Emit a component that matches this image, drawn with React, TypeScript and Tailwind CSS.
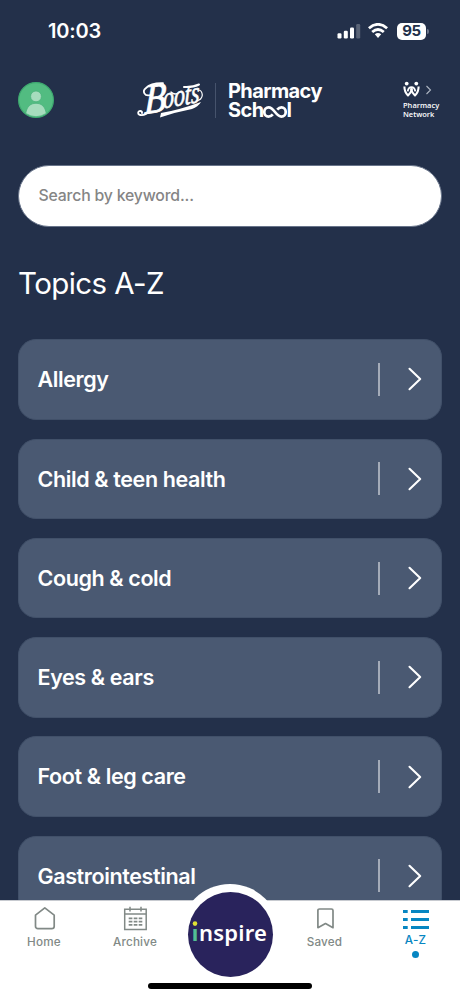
import React from "react";

const topics = [
  "Allergy",
  "Child & teen health",
  "Cough & cold",
  "Eyes & ears",
  "Foot & leg care",
  "Gastrointestinal",
];

function StatusBar() {
  return (
    <div className="flex h-[62px] shrink-0 items-center justify-between pr-[31px] pl-[48px] text-white">
      <span className="text-[20px] leading-6 font-semibold tracking-[-0.2px]">10:03</span>
      <div className="flex items-center">
        <svg width="24" height="16" viewBox="0 0 24 16" fill="white">
          <rect x="0.5" y="10.3" width="4" height="5.2" rx="1.2" />
          <rect x="6.8" y="7.8" width="4" height="7.7" rx="1.2" />
          <rect x="13" y="4.5" width="4" height="11" rx="1.2" />
          <rect x="19.2" y="1" width="4" height="14.5" rx="1.2" fillOpacity=".25" />
        </svg>
        <svg className="ml-[7px]" width="20" height="16" viewBox="0 0 20 16" fill="none" stroke="white" strokeWidth="2.8">
          <path d="M.9 5.2Q10-2.5 19.1 5.2" />
          <path d="M4.2 9Q10 4 15.8 9" />
          <path d="M6.8 11.2Q10 8.6 13.2 11.2L10 14.9Z" fill="white" stroke="none" />
        </svg>
        <div className="ml-[9px] flex h-[17px] w-[29px] items-center justify-center rounded-[5px] bg-white text-[15px] font-bold tracking-[-0.3px] text-[#22304a]">95</div>
        <div className="ml-[1px] h-[5px] w-[2px] rounded-r-full bg-[#69748a]" />
      </div>
    </div>
  );
}

function BootsLogo() {
  return (
    <svg className="block overflow-visible" width="67" height="36" viewBox="0 0 67 36" aria-label="Boots">
      <g fill="white" stroke="white" fontFamily="'Liberation Serif', serif" fontStyle="italic" fontWeight="400">
        <text transform="translate(7 32) rotate(-8) skewX(-10)" fontSize="42" strokeWidth=".9" textLength="22" lengthAdjust="spacingAndGlyphs">B</text>
        <text transform="translate(26 26.5) rotate(-10) skewX(-10)" fontSize="30" strokeWidth=".7" textLength="37" lengthAdjust="spacingAndGlyphs">oots</text>
      </g>
      <g fill="none" stroke="white" strokeLinecap="round">
        <path strokeWidth="1.8" d="M14 13C7 15 5 9 9 6C13 2 20 1 26 1.2" />
        <path strokeWidth="1.9" d="M11 30C8 34 1.2 34 1.2 31C1.2 28 5.5 28.5 5 31" />
        <path strokeWidth="2" d="M47 5Q56 5.5 62 2.5" />
        <path strokeWidth="1.2" d="M34 10Q38 14 43 10M61 8Q65 8 65.3 13Q65 18 59 19" />
      </g>
      <path fill="white" d="M23 35.5L24 31Q42 28 64 20Q61 25 55 27Q39 30 23 35.5Z" />
    </svg>
  );
}

function SchoolLogo() {
  return (
    <div className="ml-[12px] flex h-[38px] w-[95px] flex-col text-[20px] font-bold text-white" aria-label="Pharmacy School">
      <span className="h-[19px] leading-[20px] tracking-[-0.6px]">Pharmacy</span>
      <span className="flex h-[19px] leading-[21px] tracking-[-0.6px]">
        Sch
        <svg className="-ml-[1px] mt-[6px]" width="24" height="12" viewBox="0 0 24 12" fill="none" stroke="white" strokeWidth="2.7">
          <path d="M14.2 3.6C15.5 2.1 17 1.4 18.4 1.4C20.9 1.4 22.7 3.3 22.7 6C22.7 8.7 20.9 10.6 18.4 10.6C12.8 10.6 11.2 1.4 5.6 1.4C3.1 1.4 1.3 3.3 1.3 6C1.3 8.7 3.1 10.6 5.6 10.6C7.2 10.6 8.6 9.9 9.8 8.4" />
        </svg>
        l
      </span>
    </div>
  );
}

function Header() {
  return (
    <header className="flex h-[76px] shrink-0 items-center pl-[18px]">
      <svg width="36" height="36" viewBox="0 0 36 36">
        <circle cx="18" cy="18" r="17.4" fill="#52bc81" stroke="#3eaa70" strokeWidth="1.2" />
        <circle cx="18" cy="14.4" r="5.4" fill="#a6dcbd" stroke="#43af77" strokeWidth=".7" />
        <path d="M7.7 31.4C9 24.5 12.4 21.3 18 21.3S27 24.5 28.3 31.4Q18 38 7.7 31.4Z" fill="#a6dcbd" stroke="#43af77" strokeWidth=".7" />
      </svg>
      <div className="ml-[83px] flex items-center">
        <BootsLogo />
        <div className="ml-[11px] h-[35px] w-[1px] bg-[#46536c]" />
        <SchoolLogo />
      </div>
      <div className="ml-[80px] flex h-[38px] flex-col text-white">
        <div className="flex h-[17px] items-center">
          <svg width="17" height="17" viewBox="0 0 17 17" fill="none" stroke="white" strokeWidth="2.1" strokeLinejoin="round">
            <circle cx="3.7" cy="2.6" r="1.9" fill="white" stroke="none" />
            <circle cx="13.3" cy="2.6" r="1.9" fill="white" stroke="none" />
            <path d="M1.4 5.5C1.4 9.2 2.8 12.4 5 14.5C6.8 12.8 8.4 10.4 9.3 7.2" />
            <path d="M15.6 5.5C15.6 9.2 14.2 12.4 12 14.5C10.2 12.8 8.6 10.4 7.7 7.2" />
            <path d="M4.7 10.3Q5.4 6.2 8.5 6.2T12.3 10.3" strokeWidth="1.8" />
          </svg>
          <svg className="ml-[5px]" width="7" height="10" viewBox="0 0 7 10" fill="none" stroke="#aeb5c1" strokeWidth="1.1"><path d="M1.5 1L5.5 5L1.5 9" /></svg>
        </div>
        <span className="mt-[2.5px] font-['Open_Sans',sans-serif] text-[7.5px] leading-[9px] font-semibold">Pharmacy<br />Network</span>
      </div>
    </header>
  );
}

function TopicCard({ name }: { name: string }) {
  return (
    <div className="flex h-[80.4px] shrink-0 items-center rounded-[18px] border border-[#415069] bg-[#4a5972] pr-[19px] pl-[18.5px]">
      <span className="flex-1 text-[21.5px] font-semibold tracking-[-0.38px] whitespace-nowrap text-white">{name}</span>
      <div className="h-[33px] w-[2px] bg-[#a4abb8]" />
      <svg className="ml-[27px]" width="15" height="24" viewBox="0 0 15 24" fill="none" stroke="white" strokeWidth="2.1" strokeLinecap="round" strokeLinejoin="round">
        <path d="M2.5 1.8L13.2 12L2.5 22.2" />
      </svg>
    </div>
  );
}

function BottomNav() {
  return (
    <nav className="relative flex h-[99px] shrink-0 border-t border-[#c7cad0] bg-white text-[11.7px] leading-[14px] font-medium tracking-[0.2px] text-[#818986]">
      <div className="flex w-[88px] flex-col items-center pt-[5px]">
        <svg width="24" height="26" viewBox="0 0 24 26" fill="none" stroke="currentColor" strokeWidth="1.7" strokeLinejoin="round">
          <path d="M3.5 9.2L12.8 1.9L22.2 9.2V20.2Q22.2 22.6 19.7 22.6H6Q3.5 22.6 3.5 20.2Z" />
        </svg>
        <span className="mt-[3px]">Home</span>
      </div>
      <div className="flex w-[94px] flex-col items-center pt-[5px]">
        <svg width="24" height="26" viewBox="0 0 24 26" fill="none" stroke="currentColor" strokeWidth="1.5">
          <path d="M1.7 3.3H23.2V23.4H1.7ZM1.7 8H23.2M7 .7V5.5M18 .7V5.5" />
          <path d="M5.7 12.4H19.3M5.7 15.6H19.3M5.7 18.8H19.3" strokeWidth="1.7" strokeDasharray="3.7 1.3" />
        </svg>
        <span className="mt-[3px]">Archive</span>
      </div>
      <div className="w-[96px]" />
      <div className="flex w-[93px] flex-col items-center pt-[5px]">
        <svg width="20" height="26" viewBox="0 0 20 26" fill="none" stroke="currentColor" strokeWidth="1.7" strokeLinejoin="round">
          <path d="M2.9 4.6Q2.9 3 4.5 3H16.4Q18 3 18 4.6V21.7L10.5 17.5L2.9 21.7Z" />
        </svg>
        <span className="mt-[3px]">Saved</span>
      </div>
      <div className="flex w-[89px] flex-col items-center pt-[8px] text-[#0786c2]">
        <svg width="26" height="22" viewBox="0 0 26 22" fill="none" stroke="currentColor" strokeWidth="2.8">
          <path d="M0 2.5H4.7M8 2.5H26M0 10.5H4.7M8 10.5H26M0 18.5H4.7M8 18.5H26" />
        </svg>
        <span className="mt-[2px]">A-Z</span>
        <div className="mt-[4px] h-[7px] w-[7px] rounded-full bg-[#0786c2]" />
      </div>
      <div className="absolute -top-[17px] left-[180px] flex h-[100px] w-[100px] items-center justify-center rounded-full bg-white">
        <div className="flex h-[85px] w-[85px] items-center justify-center rounded-full bg-[#29235c]">
          <svg className="overflow-visible" width="80" height="32" viewBox="0 0 80 32" fill="white" fontFamily="'Noto Sans', sans-serif" fontWeight="600">
            <text x="9" y="22.5" fontSize="22" textLength="68" lengthAdjust="spacingAndGlyphs">nspire</text>
            <text x="1.8" y="22.5" fontSize="22" fontWeight="700" fill="#52bf94">ı</text>
            <circle cx="5" cy="5.6" r="2.3" fill="#dfe034" />
          </svg>
        </div>
      </div>
      <div className="absolute bottom-[10px] left-[148px] h-[6px] w-[164px] rounded-full bg-black" />
    </nav>
  );
}

export default function App() {
  return (
    <div className="flex h-[999px] w-[460px] flex-col overflow-hidden bg-[#23304a] font-['Inter',sans-serif]">
      <StatusBar />
      <Header />
      <main className="flex min-h-0 flex-1 flex-col overflow-hidden px-[18px] pt-[26.5px]">
        <input className="h-[62px] w-full shrink-0 rounded-full border border-[#68748a] bg-white px-[19.5px] pb-[1px] text-[15.8px] font-medium tracking-[-0.18px] text-gray-700 outline-none placeholder:text-[#858585]" placeholder="Search by keyword..." />
        <h1 className="mt-[36px] h-[40px] shrink-0 text-[29.5px] leading-[40px] font-normal tracking-[-0.6px] text-white">Topics A-Z</h1>
        <div className="mt-[36.8px] flex flex-col gap-[18.9px]">
          {topics.map((name) => <TopicCard key={name} name={name} />)}
        </div>
      </main>
      <BottomNav />
    </div>
  );
}
